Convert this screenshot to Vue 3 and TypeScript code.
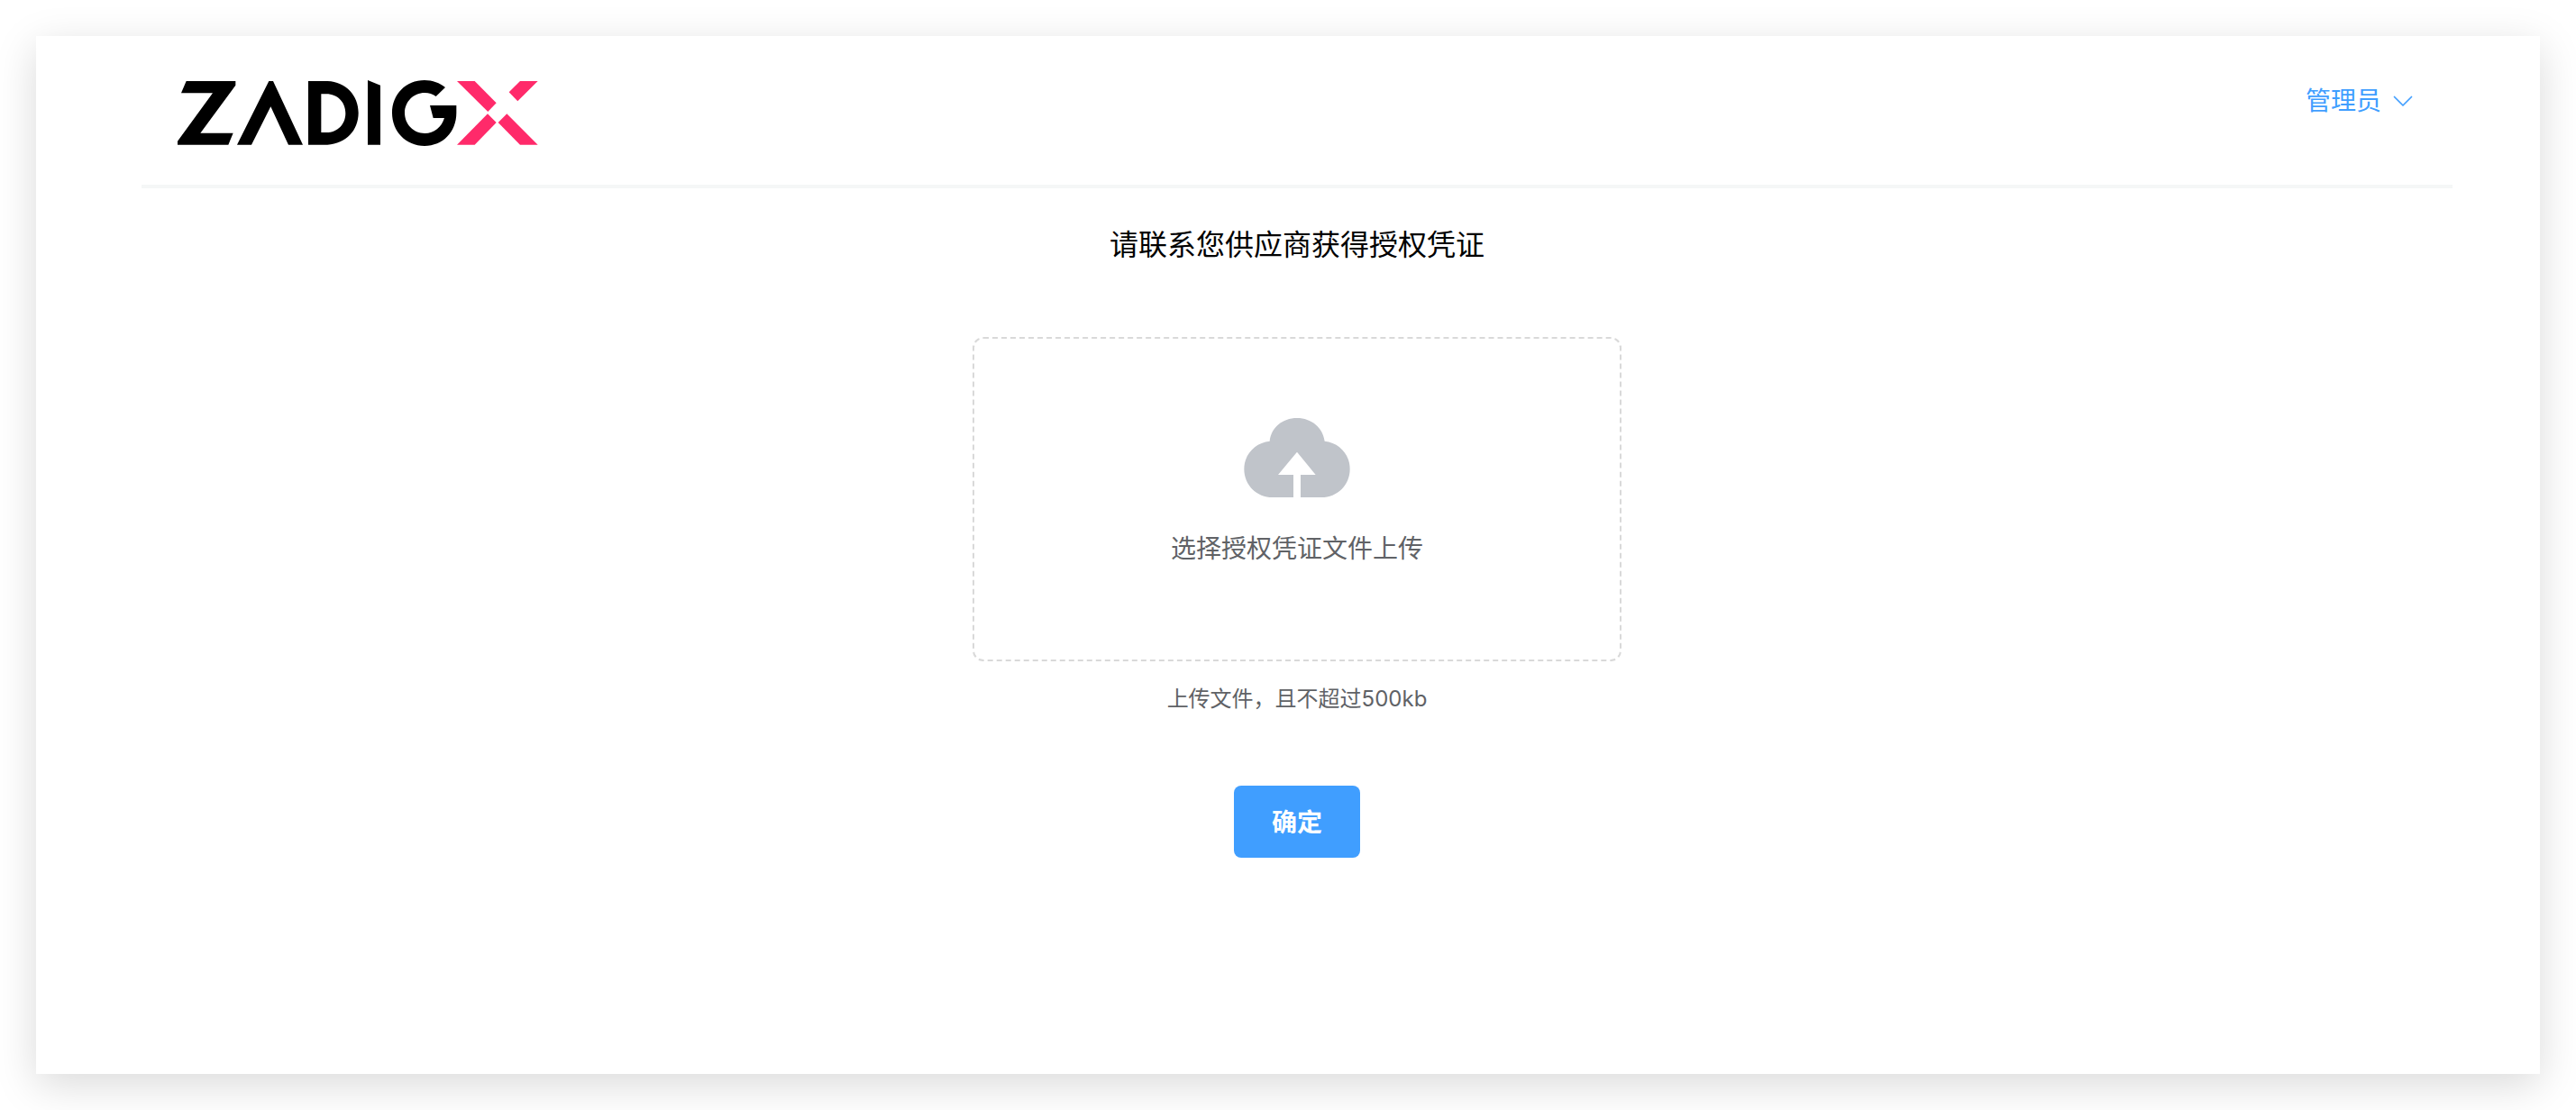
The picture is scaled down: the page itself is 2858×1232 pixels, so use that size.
<script setup lang="ts">
import { ref } from 'vue'

const userName = '管理员'
const fileName = ref<string>('')

function onFileChange(event: Event): void {
  const input = event.target as HTMLInputElement
  fileName.value = input.files?.[0]?.name ?? ''
}
</script>

<template>
  <main class="card">
    <header class="header">
      <svg class="logo" viewBox="51 54 1200 225" role="img" aria-label="ZadigX">
        <g fill="#000">
          <path d="M80 60H244V74L127 233H236L220 272H51V260L168 100H63Z" />
          <path d="M355 60H369L468 272H420L361 145L297 272H249Z" />
          <path fill-rule="evenodd" d="M486 60H550C612 63 653 108 653 166C653 224 612 269 550 272H486ZM529 103V231H546C584 231 610 203 610 167C610 131 584 103 546 103Z" />
          <path d="M684 57L726 74V272H684Z" />
          <path d="M942 81L911 111C900 103 888 99 874 99C836 99 807 129 807 166C807 204 836 234 874 234C905 234 930 213 939 183H902L891 141H979V166C979 230 934 276 873 276C811 276 765 228 765 166C765 104 811 57 873 57C900 57 924 66 942 81Z" />
        </g>
        <g fill="#ff2a6a">
          <path d="M981 60H1040L1112 133L1084 162Z" />
          <path d="M1191 60H1250L1183 127L1154 97Z" />
          <path d="M1083 169L1112 198L1040 272H981Z" />
          <path d="M1147 169L1250 272H1191L1118 198Z" />
        </g>
      </svg>
      <button class="user" type="button" aria-haspopup="menu">
        <span>{{ userName }}</span>
        <svg class="arrow" viewBox="0 0 28 28" aria-hidden="true">
          <path d="M4.500 9.500L14 19L23.500 9.500" fill="none" stroke="currentColor" stroke-width="1.700" stroke-linecap="round" stroke-linejoin="round" />
        </svg>
      </button>
    </header>

    <form class="license" @submit.prevent>
      <h1 class="title">请联系您供应商获得授权凭证</h1>
      <label class="upload">
        <input class="file" type="file" @change="onFileChange" />
        <svg class="cloud" viewBox="0 0 354 264" aria-hidden="true">
          <path fill="#c0c4ca" d="M86 77C91 32 128 0 177 0C225 0 263 32 269 77C318 82 353 121 353 170C353 222 312 264 258 264H189V189H239L177 113L114 189H165V264H96C42 264 1 222 1 170C1 121 37 82 86 77Z" />
        </svg>
        <span class="upload-text">{{ fileName || '选择授权凭证文件上传' }}</span>
      </label>
      <p class="tip">上传文件，且不超过500kb</p>
      <button class="confirm" type="submit">确定</button>
    </form>
  </main>
</template>

<style>
body {
  background: #fff;
}
</style>

<style scoped>
.card {
  box-sizing: border-box;
  margin: 40px;
  padding: 0 97px 240px 117px;
  background: #fff;
  box-shadow: 0 12px 44px rgba(0, 0, 0, 0.15);
  font-family: Inter, "Noto Sans CJK SC", sans-serif;
}

.header {
  display: flex;
  justify-content: space-between;
  align-items: flex-start;
  padding: 48px 41px 42px 40px;
  border-bottom: 4px solid #f5f7f7;
}

.logo {
  display: block;
  width: 400px;
  height: 75px;
}

.user {
  display: flex;
  align-items: center;
  gap: 10px;
  padding: 4px 0;
  border: 0;
  background: none;
  color: #409eff;
  font: inherit;
  font-size: 28px;
  line-height: 40px;
  cursor: pointer;
}

.arrow {
  width: 28px;
  height: 28px;
}

.license {
  display: flex;
  flex-direction: column;
  align-items: center;
}

.title {
  margin: 39px 0 78px;
  color: #000;
  font-size: 32px;
  font-weight: 400;
  line-height: 48px;
}

.upload {
  position: relative;
  box-sizing: border-box;
  display: flex;
  flex-direction: column;
  align-items: center;
  width: 720px;
  max-width: 100%;
  height: 360px;
  padding-top: 88px;
  border: 2px dashed #d9d9d9;
  border-radius: 12px;
  cursor: pointer;
}

.file {
  position: absolute;
  inset: 0;
  width: 100%;
  height: 100%;
  opacity: 0;
  cursor: pointer;
}

.cloud {
  width: 118px;
  height: 88px;
}

.upload-text {
  margin-top: 37px;
  color: #606266;
  font-size: 28px;
  line-height: 40px;
}

.tip {
  margin: 24px 0 78px;
  color: #606266;
  font-size: 24px;
  line-height: 36px;
}

.confirm {
  width: 140px;
  height: 80px;
  padding: 0 0 2px;
  border: 0;
  border-radius: 8px;
  background: #409eff;
  color: #fff;
  font: inherit;
  font-size: 28px;
  font-weight: 700;
  cursor: pointer;
}
</style>
